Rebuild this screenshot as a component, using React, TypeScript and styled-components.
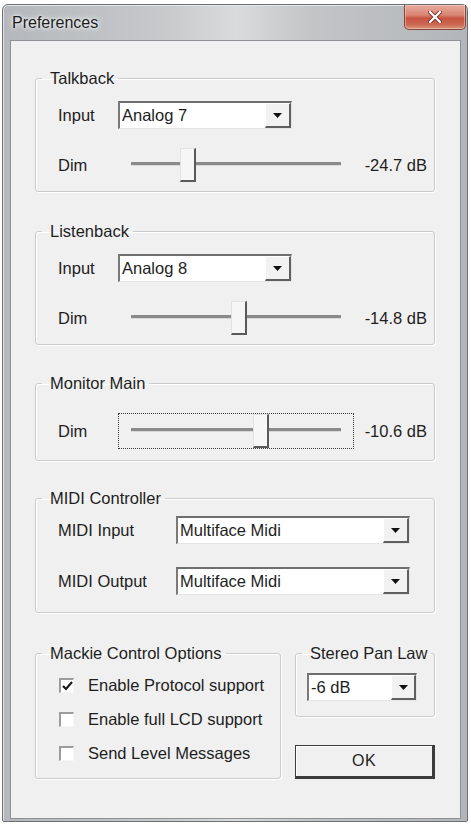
import * as React from 'react';
import styled, { createGlobalStyle } from 'styled-components';

const GlobalStyle = createGlobalStyle`
    html, body {
        margin: 0;
        padding: 0;
        background: #ffffff;
    }
    body {
        font-family: 'Liberation Sans', Arial, sans-serif;
        font-size: 16.5px;
        color: #1e1e1e;
    }
`;

const Window = styled.div`
    margin: 4px 0 0 2px;
    width: 466px;
    height: 818px;
    box-sizing: border-box;
    display: flex;
    flex-direction: column;
    border: 1px solid #6c7075;
    border-radius: 6px 6px 2px 2px;
    background: linear-gradient(
        90deg,
        #b4b8bc 0%,
        #c7c9cb 35%,
        #dadbdc 50%,
        #c3c5c7 66%,
        #b2b6ba 100%
    );
    box-shadow: inset 0 1px 0 #e6e8ea, inset 1px 0 0 #dfe1e3;
`;

const TitleBar = styled.div`
    height: 35px;
    flex: 0 0 auto;
    display: flex;
    justify-content: space-between;
    align-items: flex-start;
`;

const Title = styled.div`
    padding: 8px 0 0 9px;
    font-size: 16px;
    line-height: 19px;
    color: #1c1c1c;
    text-shadow: 0 0 6px #ffffff, 0 0 3px #ffffff;
`;

const CloseButton = styled.div`
    width: 62px;
    height: 25px;
    margin-right: 1px;
    box-sizing: border-box;
    display: flex;
    align-items: center;
    justify-content: center;
    border: 1px solid #84453b;
    border-top: none;
    border-radius: 0 0 5px 5px;
    background: linear-gradient(
        180deg,
        #e8ac9e 0%,
        #d98473 42%,
        #c75340 55%,
        #cc6650 80%,
        #db9479 100%
    );
    box-shadow: inset 0 0 0 1px rgba(255, 220, 210, 0.45);
`;

const Client = styled.div`
    flex: 1 1 auto;
    margin: 0 6px 2px 7px;
    padding: 27px 25px 0 24px;
    border: 1px solid #8e9296;
    background: #f0f0f0;
    display: flex;
    flex-direction: column;
`;

const Group = styled.fieldset<{ $gap?: number }>`
    margin: ${p => p.$gap || 0}px 0 0 0;
    padding: 0;
    min-width: 0;
    border: 1px solid #c9cbcd;
    border-radius: 3px;
    box-shadow: 1px 1px 0 #ffffff, inset 1px 1px 0 #ffffff;
`;

const Legend = styled.legend`
    margin-left: 6px;
    padding: 0 4px 0 8px;
    line-height: 20px;
    color: #1e1e1e;
`;

const ControlGrid = styled.div<{ $cols: string; $pad: string; $gap: number }>`
    display: grid;
    grid-template-columns: ${p => p.$cols};
    grid-auto-rows: 36px;
    row-gap: ${p => p.$gap}px;
    align-items: center;
    padding: ${p => p.$pad};
`;

const Label = styled.span`
    white-space: nowrap;
`;

const Value = styled.span`
    justify-self: end;
    white-space: nowrap;
    margin-right: 1px;
`;

const ComboBox = styled.div<{ $width: number }>`
    width: ${p => p.$width}px;
    height: 28px;
    box-sizing: border-box;
    display: flex;
    border-top: 2px solid #6e6e6e;
    border-left: 2px solid #7a7a7a;
    border-right: 1px solid #e4e4e4;
    border-bottom: 1px solid #e4e4e4;
    background: #ffffff;
`;

const ComboText = styled.span`
    flex: 1 1 auto;
    padding: 1px 0 0 2px;
    line-height: 22px;
    white-space: nowrap;
    overflow: hidden;
`;

const ComboArrow = styled.div<{ $width: number }>`
    width: ${p => p.$width}px;
    flex: 0 0 auto;
    box-sizing: border-box;
    display: flex;
    align-items: center;
    justify-content: center;
    background: #f2f2f2;
    border-top: 1px solid #ffffff;
    border-left: 1px solid #ffffff;
    border-right: 2px solid #5f5f5f;
    border-bottom: 2px solid #5f5f5f;
`;

const SliderBox = styled.div<{ $focused?: boolean }>`
    position: relative;
    width: 236px;
    height: 36px;
    box-sizing: border-box;
    display: flex;
    align-items: flex-start;
    padding: 0 12px;
    border: 1px dotted ${p => (p.$focused ? '#3a3a3a' : 'transparent')};
`;

const Track = styled.div`
    flex: 1 1 auto;
    height: 3px;
    margin-top: 14px;
    background: #8a8a8a;
    box-shadow: 0 1px 0 #d8d8d8;
`;

const Thumb = styled.div`
    position: absolute;
    top: 0;
    width: 16px;
    height: 34px;
    box-sizing: border-box;
    background: #f6f6f6;
    border-top: 1px solid #e2e2e2;
    border-left: 1px solid #e2e2e2;
    border-right: 2px solid #5a5a5a;
    border-bottom: 2px solid #5a5a5a;
`;

const BottomRow = styled.div`
    margin-top: 30px;
    display: grid;
    grid-template-columns: 246px 1fr;
    column-gap: 14px;
    align-items: start;
`;

const CheckList = styled.div`
    display: flex;
    flex-direction: column;
    padding: 5px 0 8px 23px;
`;

const CheckRow = styled.div`
    height: 34px;
    display: flex;
    align-items: center;
    gap: 14px;
    white-space: nowrap;
`;

const CheckBox = styled.div`
    width: 15px;
    height: 15px;
    box-sizing: border-box;
    display: flex;
    align-items: center;
    justify-content: center;
    background: #ffffff;
    border-top: 2px solid #9c9c9c;
    border-left: 2px solid #9c9c9c;
    border-right: 1px solid #f6f6f6;
    border-bottom: 1px solid #f6f6f6;
`;

const RightColumn = styled.div`
    display: flex;
    flex-direction: column;
`;

const PanBody = styled.div`
    padding: 10px 0 15px 11px;
`;

const OkButton = styled.div`
    margin-top: 28px;
    width: 140px;
    height: 34px;
    box-sizing: border-box;
    display: flex;
    align-items: center;
    justify-content: center;
    background: #f0f0f0;
    border: 1px solid #3c3c3c;
    border-right-width: 3px;
    border-bottom-width: 3px;
    box-shadow: inset 1px 1px 0 #ffffff;
    font-size: 16px;
    letter-spacing: 0.5px;
`;

const Arrow = () => (
    <svg width="9" height="5" viewBox="0 0 9 5">
        <path d="M0 0 H9 L4.5 5 Z" fill="#111" />
    </svg>
);

const Combo = ({ text, width, arrow = 26 }: { text: string; width: number; arrow?: number }) => (
    <ComboBox $width={width}>
        <ComboText>{text}</ComboText>
        <ComboArrow $width={arrow}>
            <Arrow />
        </ComboArrow>
    </ComboBox>
);

const Slider = ({ pos, focused }: { pos: number; focused?: boolean }) => (
    <SliderBox $focused={focused}>
        <Track />
        <Thumb style={{ left: `${Math.round(pos * 218)}px` }} />
    </SliderBox>
);

const Check = ({ checked, label }: { checked?: boolean; label: string }) => (
    <CheckRow>
        <CheckBox>
            {checked && (
                <svg width="11" height="10" viewBox="0 0 11 10">
                    <path d="M1 5 L4 8 L10 1" stroke="#1a1a1a" strokeWidth="2.2" fill="none" />
                </svg>
            )}
        </CheckBox>
        <span>{label}</span>
    </CheckRow>
);

const inputCols = '60px 236px 1fr';

export default function App() {
    return (
        <>
            <GlobalStyle />
            <Window>
                <TitleBar>
                    <Title>Preferences</Title>
                    <CloseButton>
                        <svg width="14" height="12" viewBox="0 0 14 12">
                            <path
                                d="M2 1 L12 11 M12 1 L2 11"
                                stroke="#7a2a20"
                                strokeWidth="4"
                                strokeLinecap="round"
                            />
                            <path
                                d="M2 1 L12 11 M12 1 L2 11"
                                stroke="#ffffff"
                                strokeWidth="2.4"
                                strokeLinecap="round"
                            />
                        </svg>
                    </CloseButton>
                </TitleBar>
                <Client>
                    <Group>
                        <Legend>Talkback</Legend>
                        <ControlGrid $cols={inputCols} $pad="9px 6px 8px 22px" $gap={14}>
                            <Label>Input</Label>
                            <Combo text="Analog 7" width={174} />
                            <span />
                            <Label>Dim</Label>
                            <Slider pos={0.28} />
                            <Value>-24.7 dB</Value>
                        </ControlGrid>
                    </Group>

                    <Group $gap={29}>
                        <Legend>Listenback</Legend>
                        <ControlGrid $cols={inputCols} $pad="9px 6px 8px 22px" $gap={14}>
                            <Label>Input</Label>
                            <Combo text="Analog 8" width={174} />
                            <span />
                            <Label>Dim</Label>
                            <Slider pos={0.514} />
                            <Value>-14.8 dB</Value>
                        </ControlGrid>
                    </Group>

                    <Group $gap={28}>
                        <Legend>Monitor Main</Legend>
                        <ControlGrid $cols={inputCols} $pad="20px 6px 11px 22px" $gap={0}>
                            <Label>Dim</Label>
                            <Slider pos={0.615} focused />
                            <Value>-10.6 dB</Value>
                        </ControlGrid>
                    </Group>

                    <Group $gap={27}>
                        <Legend>MIDI Controller</Legend>
                        <ControlGrid $cols="118px 234px" $pad="4px 6px 13px 22px" $gap={15}>
                            <Label>MIDI Input</Label>
                            <Combo text="Multiface Midi" width={234} />
                            <Label>MIDI Output</Label>
                            <Combo text="Multiface Midi" width={234} />
                        </ControlGrid>
                    </Group>

                    <BottomRow>
                        <Group>
                            <Legend>Mackie Control Options</Legend>
                            <CheckList>
                                <Check checked label="Enable Protocol support" />
                                <Check label="Enable full LCD support" />
                                <Check label="Send Level Messages" />
                            </CheckList>
                        </Group>
                        <RightColumn>
                            <Group>
                                <Legend>Stereo Pan Law</Legend>
                                <PanBody>
                                    <Combo text="-6 dB" width={110} arrow={25} />
                                </PanBody>
                            </Group>
                            <OkButton>OK</OkButton>
                        </RightColumn>
                    </BottomRow>
                </Client>
            </Window>
        </>
    );
}
